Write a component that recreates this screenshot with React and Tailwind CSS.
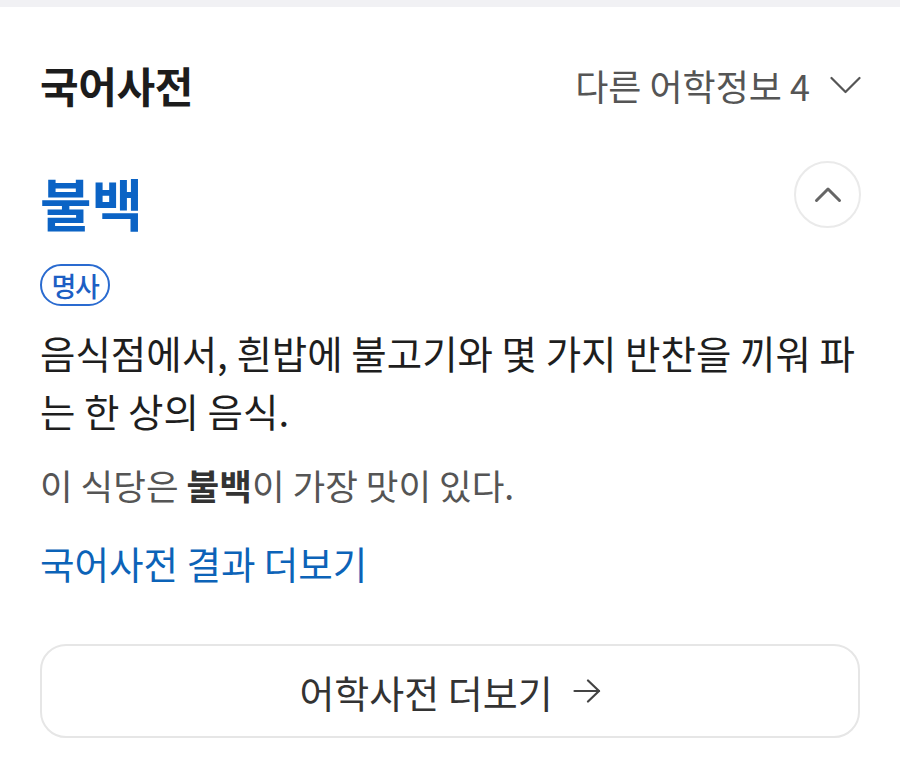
const FONT = { fontFamily: '"Noto Sans CJK KR", "Noto Sans", sans-serif' }

function ChevronDownIcon() {
  return (
    <svg width="31" height="18" viewBox="0 0 31 18" fill="none" className="shrink-0">
      <polyline points="1.5,2 15.5,16 29.5,2" stroke="#555" strokeWidth="2.2" strokeLinecap="round" strokeLinejoin="round" />
    </svg>
  )
}

function ChevronUpIcon() {
  return (
    <svg width="28" height="17" viewBox="0 0 28 17" fill="none">
      <polyline points="2.5,14.5 14,3 25.5,14.5" stroke="#666" strokeWidth="3" strokeLinecap="round" strokeLinejoin="round" />
    </svg>
  )
}

function ArrowIcon() {
  return (
    <svg width="28" height="24" viewBox="0 0 28 24" fill="none" className="shrink-0">
      <line x1="1.5" y1="12" x2="26" y2="12" stroke="#444" strokeWidth="2.2" strokeLinecap="round" />
      <polyline points="15,1.5 26,12 15,22.5" stroke="#444" strokeWidth="2.2" strokeLinecap="round" strokeLinejoin="round" />
    </svg>
  )
}

export default function App() {
  return (
    <div className="w-[900px] min-h-[768px] bg-[#f1f1f4] pt-[7px]" style={FONT}>
      <div className="bg-white min-h-[761px] px-[40px] pt-[58px]">
        {/* Header */}
        <div className="flex items-center justify-between h-[40px]">
          <h2 className="text-[42px] font-bold text-[#1c1c1c] leading-none tracking-[-0.01em]">국어사전</h2>
          <button className="flex items-center gap-[20px] text-[36px] text-[#555] leading-none -mr-px">
            <span>다른 어학정보 4</span>
            <ChevronDownIcon />
          </button>
        </div>

        {/* Entry */}
        <div className="flex items-start justify-between mt-[56px]">
          <h3 className="pt-[8px] text-[56px] font-bold text-[#0b63c5] leading-[66px]">불백</h3>
          <button className="w-[67px] h-[67px] rounded-full border-2 border-[#eaeaea] flex items-center justify-center -mr-px">
            <ChevronUpIcon />
          </button>
        </div>

        <div className="mt-[29px]">
          <span className="inline-flex items-center justify-center h-[42px] w-[70px] rounded-full border-2 border-[#2a6bd0] text-[#1d5fc4] text-[27px] font-medium leading-none tracking-[-0.05em]">
            명사
          </span>
        </div>

        <p className="mt-[17px] text-[38.5px] leading-[58px] text-[#1e1e1e]">
          음식점에서, 흰밥에 불고기와 몇 가지 반찬을 끼워 파는 한 상의 음식.
        </p>

        <p className="mt-[24px] text-[35.5px] leading-[44px] text-[#555]">
          이 식당은 <b className="font-bold text-[#333]">불백</b>이 가장 맛이 있다.
        </p>

        <a className="block mt-[34px] text-[37.5px] leading-[44px] text-[#0c63b8]">
          국어사전 결과 더보기
        </a>

        <button className="mt-[59px] w-full h-[94px] rounded-[26px] border-2 border-[#e6e6e6] flex items-center justify-center gap-[20px] text-[38px] text-[#333]">
          <span>어학사전 더보기</span>
          <ArrowIcon />
        </button>
      </div>
    </div>
  )
}
